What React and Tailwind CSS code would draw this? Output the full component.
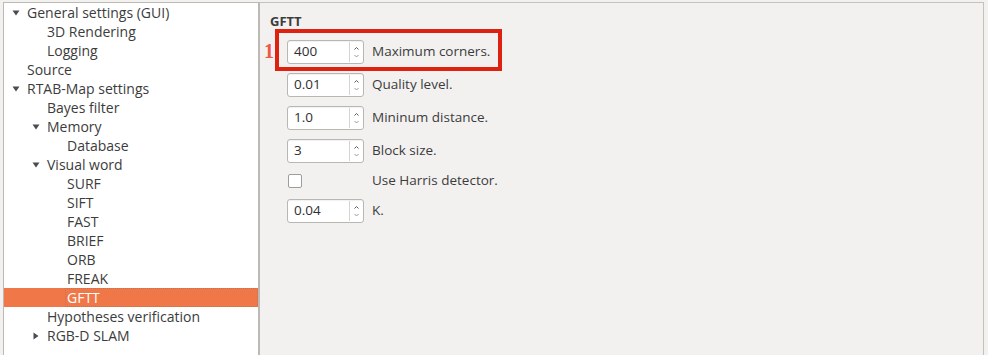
import React from 'react';

const tree = [
  { label: 'General settings (GUI)', level: 0, arrow: 'down' },
  { label: '3D Rendering', level: 1 },
  { label: 'Logging', level: 1 },
  { label: 'Source', level: 0 },
  { label: 'RTAB-Map settings', level: 0, arrow: 'down' },
  { label: 'Bayes filter', level: 1 },
  { label: 'Memory', level: 1, arrow: 'down' },
  { label: 'Database', level: 2 },
  { label: 'Visual word', level: 1, arrow: 'down' },
  { label: 'SURF', level: 2 },
  { label: 'SIFT', level: 2 },
  { label: 'FAST', level: 2 },
  { label: 'BRIEF', level: 2 },
  { label: 'ORB', level: 2 },
  { label: 'FREAK', level: 2 },
  { label: 'GFTT', level: 2, selected: true },
  { label: 'Hypotheses verification', level: 1 },
  { label: 'RGB-D SLAM', level: 1, arrow: 'right' },
];

const indent = ['w-[8px]', 'w-[28px]', 'w-[48px]'];

const Arrow = ({ dir }) => (
  <svg width="8" height="8" viewBox="0 0 8 8">
    {dir === 'down' ? (
      <path d="M0.5 1.5 H7.5 L4 6.5 Z" fill="#4c4c4c" />
    ) : (
      <path d="M1.5 0.5 V7.5 L6.5 4 Z" fill="#4c4c4c" />
    )}
  </svg>
);

const SpinBox = ({ value }) => (
  <div className="flex h-[24px] w-[77px] rounded-[3px] border border-[#b9b7b2] bg-white shadow-[inset_0_1px_1px_rgba(0,0,0,0.06)]">
    <div className="flex flex-1 items-center pl-[6px] text-[13.5px] text-[#2f2f2f]">
      {value}
    </div>
    <div className="my-[1px] w-px bg-[#d6d4d0]" />
    <div className="flex w-[13px] items-center justify-center">
      <svg width="7" height="16" viewBox="0 0 7 16">
        <path d="M1.5 5.5 L3.5 3.5 L5.5 5.5" stroke="#5a5a5a" strokeWidth="1" fill="none" />
        <path d="M1.5 11 L3.5 13 L5.5 11" stroke="#9a9a9a" strokeWidth="1" fill="none" />
      </svg>
    </div>
  </div>
);

const params = [
  { value: '400', label: 'Maximum corners.', h: 'h-[33px]' },
  { value: '0.01', label: 'Quality level.', h: 'h-[33px]' },
  { value: '1.0', label: 'Mininum distance.', h: 'h-[33px]' },
  { value: '3', label: 'Block size.', h: 'h-[33px]' },
  { check: true, label: 'Use Harris detector.', h: 'h-[27px]' },
  { value: '0.04', label: 'K.', h: 'h-[33px]' },
];

export default function App() {
  return (
    <div
      className="flex h-[355px] w-[988px] overflow-hidden bg-[#f2f1f0] pl-[3px] pt-[2px] text-[#3c3c3c]"
      style={{ fontFamily: '"Open Sans", "DejaVu Sans", sans-serif' }}
    >
      {/* TREE */}
      <div className="h-[400px] w-[257px] shrink-0 border-l border-t border-r-2 border-[#bdbab5] bg-white text-[14px]">
        {tree.map((item, i) => (
          <div
            key={i}
            className={
              'flex h-[19px] items-center ' +
              (item.selected ? 'bg-[#f07848] text-white' : '')
            }
          >
            <div className={'h-full shrink-0 ' + indent[item.level]} />
            <div className="flex h-full w-[15px] shrink-0 items-center">
              {item.arrow && <Arrow dir={item.arrow} />}
            </div>
            {item.selected ? (
              <span className="-ml-[2px] flex h-full flex-1 items-center border border-dotted border-[#c9724f] pl-[1px]">
                {item.label}
              </span>
            ) : (
              <span className="whitespace-nowrap">{item.label}</span>
            )}
          </div>
        ))}
      </div>

      {/* SETTINGS */}
      <div className="h-[400px] w-[724px] shrink-0 border-r border-t border-[#c4c2bd] bg-[#f2f1f0] pl-[10px] pt-[10px] text-[13.5px]">
        <div className="text-[13px] font-bold leading-[16px] text-[#3c3c3c]">GFTT</div>

        <div className="mt-[6px] flex flex-col">
          {params.map((p, i) => (
            <div key={i} className={'relative flex items-center pl-[17px] ' + p.h}>
              {i === 0 && (
                <>
                  <div className="absolute -top-[6px] left-[5px] h-[42px] w-[227px] border-[4px] border-[#dd2211]" />
                  <span
                    className="absolute left-[-6px] top-[1px] text-[20px] font-bold text-[#ec5a43]"
                    style={{ fontFamily: '"Liberation Serif", serif' }}
                  >
                    1
                  </span>
                </>
              )}
              <div className="w-[85px] shrink-0">
                {p.check ? (
                  <div className="ml-[1px] h-[14px] w-[14px] rounded-[2px] border border-[#9f9d99] bg-white" />
                ) : (
                  <SpinBox value={p.value} />
                )}
              </div>
              <span className="whitespace-nowrap">{p.label}</span>
            </div>
          ))}
        </div>
      </div>
    </div>
  );
}
